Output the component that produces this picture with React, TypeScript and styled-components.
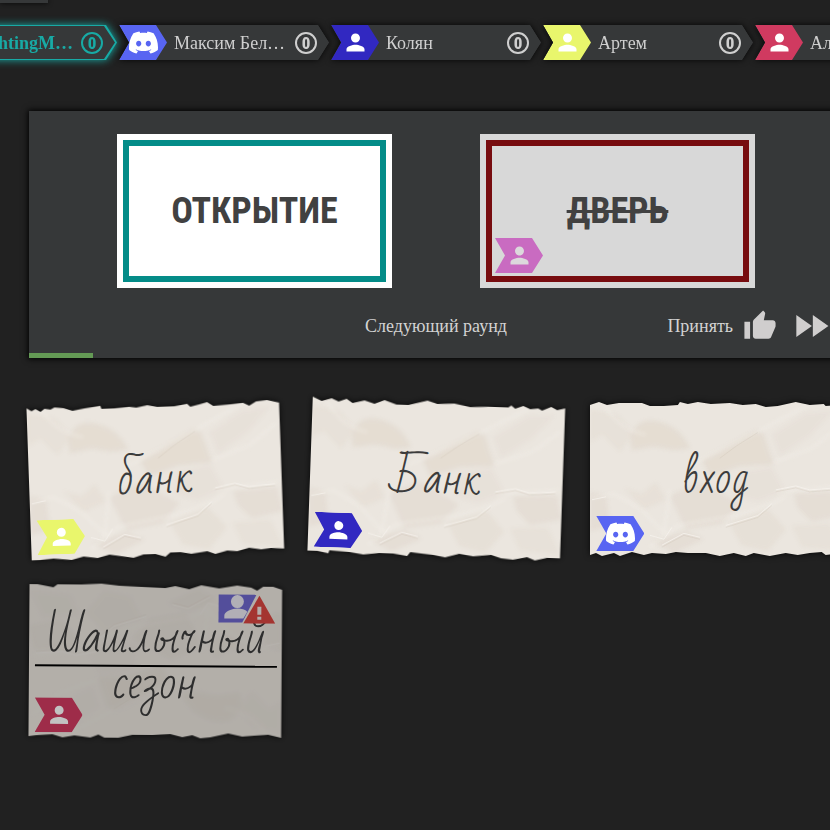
import React from 'react';
import styled, { createGlobalStyle, css } from 'styled-components';
import { MdPerson, MdThumbUp, MdFastForward } from 'react-icons/md';
import { SiDiscord } from 'react-icons/si';

const GlobalStyle = createGlobalStyle`
  * { box-sizing: border-box; }
  body {
    margin: 0;
    background: #212121;
    color: #d3d3d3;
    font-family: 'Liberation Serif', 'Times New Roman', serif;
    font-size: 18px;
    line-height: 20px;
  }
`;

const ACCENT = '#18aaa5';
const ARROW = 'polygon(0 0, calc(100% - 11px) 0, 100% 50%, calc(100% - 11px) 100%, 0 100%, 10px 50%)';

const Viewport = styled.div`
  min-height: 100vh;
  overflow: hidden;
`;

const Page = styled.div`
  min-width: 872px;
`;

const TopTab = styled.header`
  width: 48px;
  height: 3px;
  background: #363839;
  box-shadow: 0 0 5px #000;
`;

const Players = styled.ul`
  display: flex;
  justify-content: center;
  gap: 2px;
  margin: 0;
  padding: 22px 0 51px;
  list-style: none;
`;

const PlayerItem = styled.li<{ $active?: boolean }>`
  flex: 0 0 210px;
  height: 35px;
  color: #cfcfcf;
  filter: drop-shadow(0 0 3px rgba(0, 0, 0, 0.85));
  ${p => p.$active && css`
    color: ${ACCENT};
    font-weight: 700;
    filter: drop-shadow(0 0 4px ${ACCENT});
  `}
`;

const PlayerEdge = styled.div<{ $active?: boolean }>`
  height: 100%;
  padding: ${p => (p.$active ? '1px 2px' : '0')};
  background: ${p => (p.$active ? ACCENT : '#363839')};
  clip-path: ${ARROW};
`;

const PlayerBody = styled.div`
  display: flex;
  align-items: center;
  height: 100%;
  padding-right: 12px;
  background: #363839;
  clip-path: ${ARROW};
`;

const BadgeShape = styled.span<{ $color: string; $ink?: string }>`
  display: flex;
  flex: none;
  align-items: center;
  justify-content: center;
  width: 48px;
  height: 35px;
  background: ${p => p.$color};
  color: ${p => p.$ink || '#fff'};
  clip-path: ${ARROW};
`;

const PlayerName = styled.span`
  flex: 1;
  min-width: 0;
  padding-left: 7px;
  white-space: nowrap;
`;

const Score = styled.span`
  flex: none;
  width: 22px;
  height: 22px;
  border: 2px solid currentColor;
  border-radius: 50%;
  font: 800 17px/18px 'Roboto Condensed', Roboto, sans-serif;
  text-align: center;
`;

const Panel = styled.section`
  margin: 0 29px;
  padding-top: 23px;
  background: #363839;
  box-shadow: 0 0 6px 1px #000;
`;

const Cards = styled.div`
  display: flex;
  justify-content: space-evenly;
`;

const Card = styled.div<{ $rejected?: boolean }>`
  width: 275px;
  padding: 6px;
  background: ${p => (p.$rejected ? '#d8d8d8' : '#fff')};
`;

const CardFrame = styled.div<{ $rejected?: boolean }>`
  position: relative;
  display: flex;
  align-items: center;
  justify-content: center;
  height: 142px;
  border: 6px solid ${p => (p.$rejected ? '#770c0f' : '#048c88')};
  color: #414141;
  font: 700 36px/42px 'Roboto Condensed', Roboto, sans-serif;
`;

const CornerBadge = styled.span<{ $left: number; $bottom: number }>`
  position: absolute;
  left: ${p => p.$left}px;
  bottom: ${p => p.$bottom}px;
`;

const Controls = styled.div`
  display: grid;
  grid-template-columns: 1fr auto 1fr;
  align-items: center;
  height: 44px;
  margin: 16px 0 5px;
`;

const Actions = styled.div`
  display: flex;
  align-items: center;
  justify-content: flex-end;
  gap: 12px;
  padding-right: 10px;
`;

const PlainButton = styled.button`
  display: flex;
  align-items: center;
  gap: 10px;
  padding: 0;
  border: 0;
  background: none;
  color: inherit;
  font: inherit;
  cursor: pointer;

  svg { color: #d0cece; }
`;

const NextRound = styled(PlainButton)`
  grid-column: 2;
`;

const Timer = styled.div`
  height: 5px;
`;

const TimerFill = styled.div`
  height: 100%;
  background: #649a55;
`;

const Notes = styled.section`
  display: grid;
  grid-template-columns: repeat(3, 1fr);
  gap: 30px 28px;
  margin: 45px 29px 0;
`;

const NoteBox = styled.article<{ $tilt: number }>`
  position: relative;
  height: 152px;
  transform: rotate(${p => p.$tilt}deg);
`;

const NoteInner = styled.div<{ $dim?: boolean }>`
  display: flex;
  align-items: center;
  justify-content: center;
  height: 100%;
  filter: ${p => (p.$dim ? 'brightness(0.76)' : 'none')};
`;

const PaperSvg = styled.svg`
  position: absolute;
  top: -2px;
  left: 0;
  width: 100%;
  height: 157px;
  overflow: visible;
  filter: drop-shadow(0 0 3px rgba(0, 0, 0, 0.8));
`;

const NoteText = styled.p<{ $long?: boolean }>`
  position: relative;
  margin: 0;
  padding: 0 8px;
  color: #3c3c3c;
  font: 400 ${p => (p.$long ? 44 : 42)}px/46px 'Bad Script', Caveat, 'Liberation Serif', cursive;
  text-align: center;
`;

const Crossing = styled.div`
  position: absolute;
  top: 80px;
  left: 6px;
  right: 5px;
  height: 2px;
  background: #000;
`;

const ReportMark = styled.svg`
  position: absolute;
  top: 8px;
  right: 7px;
  width: 57px;
  height: 30px;
`;

type Point = [number, number];

const papers: Record<string, { top: Point[]; bottom: Point[] }> = {
  a: {
    top: [[0, 3], [5, 6], [9, 4], [14, 7], [18, 4], [24, 5], [28, 3], [37, 4], [46, 7], [58, 5], [74, 3], [75, 6], [88, 6], [103, 5], [110, 6], [121, 4], [131, 6], [148, 6], [161, 4], [164, 7], [173, 5], [181, 3], [187, 7], [204, 6], [217, 5], [223, 8], [230, 4], [241, 3], [253, 6]],
    bottom: [[253, 154], [240, 153], [230, 154], [218, 152], [206, 155], [196, 154], [184, 157], [176, 154], [160, 156], [149, 154], [139, 154], [134, 158], [124, 155], [112, 155], [102, 158], [90, 156], [78, 154], [66, 157], [52, 155], [40, 158], [22, 156], [8, 157], [0, 157]],
  },
  b: {
    top: [[0, 0], [9, 4], [19, 1], [26, 4], [34, 1], [40, 5], [52, 2], [62, 5], [72, 1], [84, 5], [96, 5], [115, 0], [125, 3], [142, 2], [158, 5], [176, 4], [196, 4], [199, 2], [203, 5], [211, 2], [218, 5], [226, 4], [230, 6], [239, 2], [245, 5], [253, 3]],
    bottom: [[253, 155], [240, 155], [228, 158], [220, 155], [206, 158], [194, 157], [184, 154], [166, 156], [152, 154], [138, 158], [126, 156], [114, 155], [103, 154], [100, 158], [86, 156], [72, 156], [56, 158], [42, 156], [22, 155], [21, 158], [10, 156], [0, 156]],
  },
  c: {
    top: [[0, 4], [9, 1], [17, 4], [29, 2], [40, 2], [52, 2], [60, 5], [74, 5], [88, 4], [90, 1], [98, 3], [108, 1], [121, 3], [140, 2], [153, 4], [166, 3], [176, 6], [188, 5], [206, 1], [220, 4], [234, 3], [236, 5], [253, 4]],
    bottom: [[253, 154], [236, 156], [232, 153], [220, 154], [208, 156], [196, 154], [180, 157], [164, 154], [156, 157], [144, 154], [130, 157], [116, 154], [98, 154], [86, 153], [76, 155], [62, 154], [54, 156], [42, 153], [30, 157], [24, 154], [12, 157], [6, 154], [0, 156]],
  },
  d: {
    top: [[0, 2], [8, 2], [24, 5], [28, 2], [52, 2], [72, 1], [90, 3], [112, 4], [136, 5], [146, 3], [160, 6], [172, 2], [190, 5], [208, 2], [222, 4], [228, 7], [234, 3], [244, 3], [253, 6]],
    bottom: [[253, 156], [240, 153], [226, 154], [214, 155], [200, 152], [182, 156], [172, 157], [164, 154], [154, 156], [142, 153], [124, 154], [104, 154], [90, 157], [76, 157], [70, 154], [62, 157], [46, 155], [34, 157], [24, 154], [8, 155], [0, 156]],
  },
};

function Paper({ kind }: { kind: string }) {
  const { top, bottom } = papers[kind];
  const outline = [...top, ...bottom].map(p => p.join(',')).join(' ');
  const flip = kind === 'd' ? 'translate(253 160) rotate(180)' : undefined;
  return (
    <PaperSvg viewBox="0 0 253 159" preserveAspectRatio="none" aria-hidden="true">
      <defs>
        <clipPath id={`edge-${kind}`}><polygon points={outline} /></clipPath>
        <filter id={`soft-${kind}`}><feGaussianBlur stdDeviation="2.2" /></filter>
      </defs>
      <polygon points={outline} fill="#ebe6df" />
      <g clipPath={`url(#edge-${kind})`}>
        <g transform={flip} opacity={kind === 'd' ? 0.5 : 1}>
          <g filter={`url(#soft-${kind})`} fill="#cdb9a6" opacity=".68">
            <path d="M0 8 28 14 44 32 30 52 12 34 0 42Z" opacity=".14" />
            <path d="M40 38Q46 18 64 20Q90 24 100 48L84 50 64 46 42 50Z" opacity=".3" />
            <path d="M112 60 140 44 166 30 174 34 184 64 150 66 120 76Z" opacity=".3" />
            <path d="M150 72 182 66 196 92 168 102 144 96Z" opacity=".12" />
            <path d="M80 96 110 82 150 104 132 124 96 130Z" opacity=".25" />
            <path d="M0 92 16 96 20 126 0 132Z" opacity=".25" />
            <path d="M34 88 52 94 66 82 76 100 54 110Z" opacity=".17" />
            <path d="M204 94 248 92 253 116 222 122 208 108Z" opacity=".25" />
            <path d="M140 124 178 110 196 130 178 152 152 146Z" opacity=".2" />
            <path d="M62 142 96 132 114 140 84 154Z" opacity=".25" />
            <path d="M182 34 216 12 244 10 220 36 190 56Z" opacity=".12" />
            <path d="M202 126 240 124 253 152 212 148Z" opacity=".14" />
          </g>
          <g fill="none" stroke="#f7f4ee" strokeWidth="2" opacity=".55" filter={`url(#soft-${kind})`}>
            <path d="M14 4Q30 30 56 34M98 66Q130 50 170 30L218 4M184 62 222 48 250 26M186 92 250 86" />
            <path d="M2 98 24 94 52 110 74 134 80 90M60 148 88 126 146 116 180 106 196 96" />
          </g>
          <g fill="none" stroke="#f6f3ed" strokeWidth="1" opacity=".8">
            <path d="M72 146l22-12 16 4M136 126l32-10 14-12M186 90l20-4 14 4 26-2M60 136l14 4 8-12M2 100l14-3" />
          </g>
          <g fill="none" stroke="#c8bdb0" strokeWidth="0.7" opacity=".4">
            <path d="m130 58 16-12 22-14M186 92l20-4 14 4 26-2M72 148l22-12 16 4M136 128l32-10 14-12" />
          </g>
        </g>
      </g>
    </PaperSvg>
  );
}

function Badge({ color, ink, discord }: { color: string; ink?: string; discord?: boolean }) {
  return (
    <BadgeShape $color={color} $ink={ink}>
      {discord ? <SiDiscord size={29} /> : <MdPerson size={27} />}
    </BadgeShape>
  );
}

const players = [
  { name: 'BrightingM…', color: '#8e44ad', active: true },
  { name: 'Максим Бел…', color: '#5865f2', discord: true },
  { name: 'Колян', color: '#3128c1' },
  { name: 'Артем', color: '#e9f66c' },
  { name: 'Алина', color: '#d03a60' },
];

const notes = [
  { text: 'банк', color: '#e9f66c', tilt: -2, paper: 'a' },
  { text: 'Банк', color: '#3128c1', tilt: 2, paper: 'b' },
  { text: 'вход', color: '#5865f2', tilt: 0, paper: 'c', discord: true },
  { text: 'Шашлычный сезон', color: '#d03a60', tilt: 0.4, paper: 'd', dim: true },
];

export default function App() {
  return (
    <Viewport>
      <GlobalStyle />
      <Page>
        <TopTab />
        <Players>
          {players.map(p => (
            <PlayerItem key={p.name} $active={p.active}>
              <PlayerEdge $active={p.active}>
                <PlayerBody>
                  <Badge color={p.color} discord={p.discord} />
                  <PlayerName>{p.name}</PlayerName>
                  <Score>0</Score>
                </PlayerBody>
              </PlayerEdge>
            </PlayerItem>
          ))}
        </Players>

        <Panel>
          <Cards>
            <Card>
              <CardFrame>ОТКРЫТИЕ</CardFrame>
            </Card>
            <Card $rejected>
              <CardFrame $rejected>
                <s>ДВЕРЬ</s>
                <CornerBadge $left={3} $bottom={3}>
                  <Badge color="#c96bc1" ink="#dcd8dc" />
                </CornerBadge>
              </CardFrame>
            </Card>
          </Cards>
          <Controls>
            <NextRound type="button">Следующий раунд</NextRound>
            <Actions>
              <PlainButton type="button">
                Принять
                <MdThumbUp size={34} />
              </PlainButton>
              <PlainButton type="button" aria-label="Пропустить">
                <MdFastForward size={44} />
              </PlainButton>
            </Actions>
          </Controls>
          <Timer role="progressbar" aria-label="Время" aria-valuenow={8}>
            <TimerFill style={{ width: '7.9%' }} />
          </Timer>
        </Panel>

        <Notes>
          {notes.map(n => (
            <NoteBox key={n.text} $tilt={n.tilt}>
              <NoteInner $dim={n.dim}>
                <Paper kind={n.paper} />
                <NoteText $long={n.text.length > 8}>{n.text}</NoteText>
                <CornerBadge $left={6} $bottom={4}>
                  <Badge color={n.color} discord={n.discord} />
                </CornerBadge>
                {n.dim && (
                  <ReportMark viewBox="0 0 57 30" aria-hidden="true">
                    <path d="M0 1h38L24 29H0Z" fill="#6d67cc" />
                    <circle cx="19" cy="8" r="6.5" fill="#e9e6f0" />
                    <path d="M6 25v-3c0-4 8-7 13-7 4 0 8 1 10 3l-4 7Z" fill="#e9e6f0" />
                    <path d="M41 2 57 30H25Z" fill="#d8443f" />
                    <path d="M39 13h4v8h-4zM39 23h4v3h-4z" fill="#eee4e0" />
                  </ReportMark>
                )}
              </NoteInner>
              {n.dim && <Crossing />}
            </NoteBox>
          ))}
        </Notes>
      </Page>
    </Viewport>
  );
}
